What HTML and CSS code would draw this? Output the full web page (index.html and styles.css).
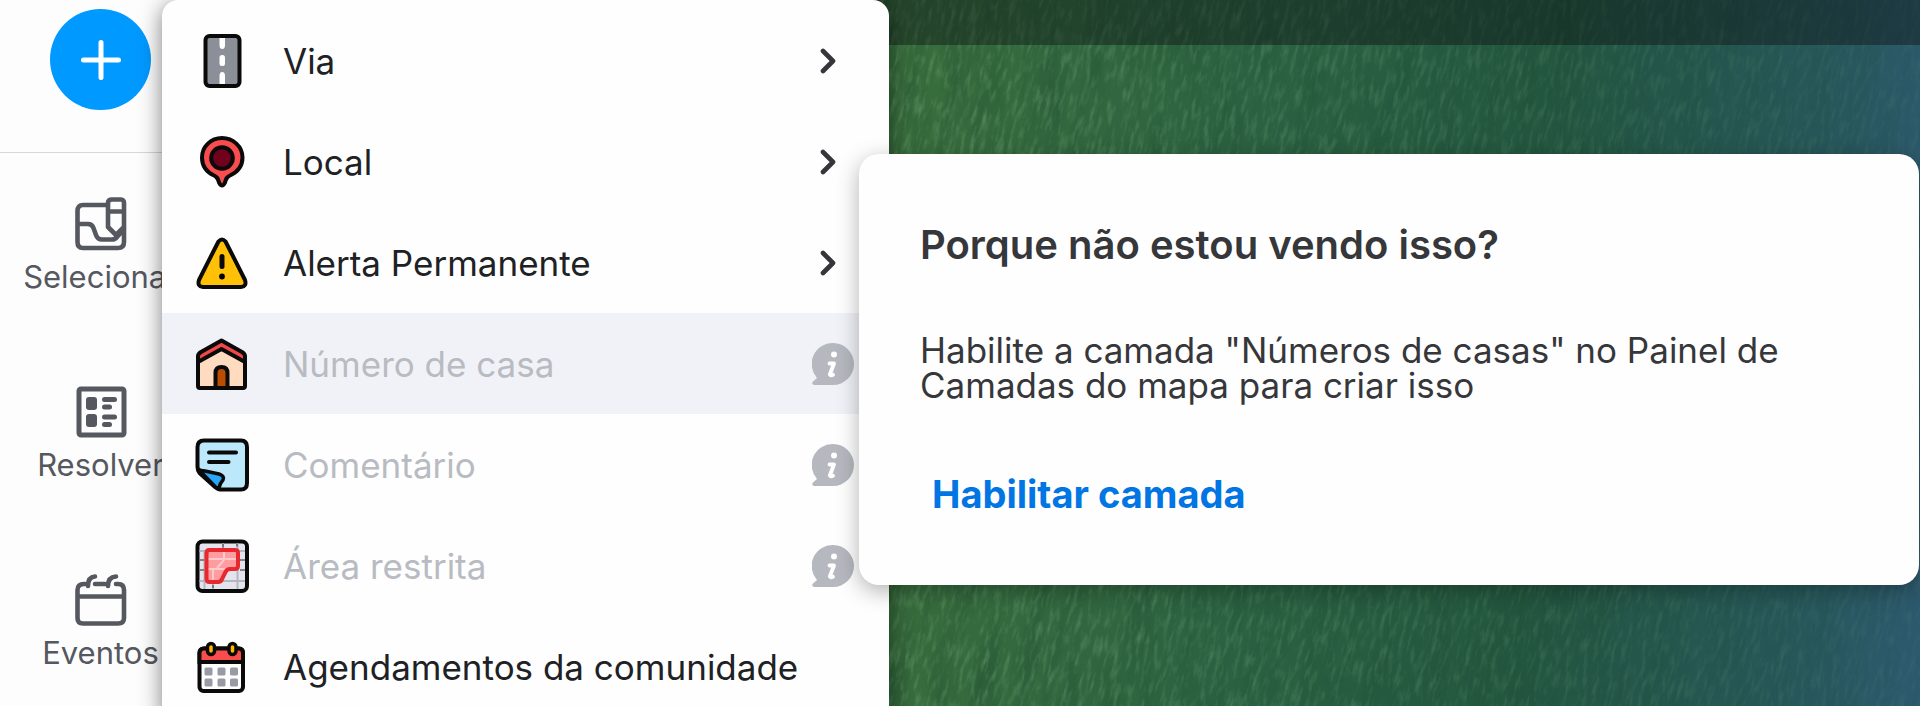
FILE: index.html
```html
<!DOCTYPE html>
<html lang="pt-BR">
<head>
<meta charset="utf-8">
<meta name="viewport" content="width=device-width, initial-scale=1">
<title>Editor de mapas</title>
<link rel="stylesheet" href="styles.css">
</head>
<body>
<svg class="defs" aria-hidden="true">
  <symbol id="chevron" viewBox="0 0 16 26"><path d="M3 3l10 10L3 23" fill="none" stroke="currentColor" stroke-width="4.6" stroke-linecap="round" stroke-linejoin="round"/></symbol>
  <symbol id="info" viewBox="0 0 42 42">
    <path d="M21 0a21 21 0 0 1 0 42H2Q-1 41 1 38.500L5 35A21 21 0 0 1 21 0z" fill="#b5b8be"/>
    <circle cx="22" cy="11.500" r="3" fill="#fff"/>
    <path d="M17.500 20.500H22L17.800 31.500Q18.500 33 21 31.800" fill="none" stroke="#fff" stroke-width="3.800" stroke-linecap="round" stroke-linejoin="round"/>
  </symbol>
</svg>
<div class="app">
  <nav class="sidebar" aria-label="Ferramentas">
    <div class="sidebar-head">
      <button class="add" type="button" aria-label="Adicionar">
        <svg width="40" height="40" viewBox="0 0 40 40"><path d="M20 2.500v35M2.500 20h35" stroke="#fff" stroke-width="5" stroke-linecap="round"/></svg>
      </button>
    </div>
    <button class="tool" type="button">
      <svg width="52" height="54" viewBox="0 0 52 54" fill="none" stroke="#55585e" stroke-width="4.6" stroke-linejoin="round" stroke-linecap="round">
        <path d="M32 8H8Q2.500 8 2.500 14V45Q2.500 51 8 51H43Q49 51 49 45V6Q49 2.500 46 2.500H37Q33 2.500 33 6V30L41 38L49 30M33 14.500H49M2.500 27H13Q17 27 18.500 31L21 38Q22.500 42.500 27 42.500H37Q40 42.500 42 40L49 32"/>
      </svg>
      <span>Selecionar</span>
    </button>
    <button class="tool" type="button">
      <svg width="52" height="54" viewBox="0 0 52 54">
        <rect x="4" y="4" width="45" height="46" rx="2" fill="none" stroke="#55585e" stroke-width="5"/>
        <g fill="#55585e"><rect x="11" y="12" width="11" height="13" rx="3"/><rect x="11" y="29" width="11" height="13" rx="3"/><rect x="27" y="12" width="15" height="5" rx="2.500"/><rect x="27" y="19.500" width="10" height="5" rx="2.500"/><rect x="27" y="29.500" width="15" height="5" rx="2.500"/><rect x="27" y="37" width="10" height="5" rx="2.500"/></g>
      </svg>
      <span>Resolver</span>
    </button>
    <button class="tool" type="button">
      <svg width="52" height="54" viewBox="0 0 52 54" fill="none" stroke="#55585e" stroke-width="4.6" stroke-linecap="round" stroke-linejoin="round">
        <path d="M10 11H9Q2.500 11 2.500 17V45Q2.500 50.500 8 50.500H43Q49 50.500 49 45V17Q49 11 43 11H41M20 11H30M2.500 23.500H49M13 13Q13 4 20 3.500M33 13Q33 4 41 3.500"/>
      </svg>
      <span>Eventos</span>
    </button>
  </nav>

  <main class="map">
    <svg class="water" width="100%" height="100%" aria-hidden="true">
      <filter id="ripple" x="0" y="0" width="100%" height="100%" color-interpolation-filters="sRGB">
        <feTurbulence type="fractalNoise" baseFrequency="0.22 0.05" numOctaves="4" seed="7"/>
        <feColorMatrix values="0 0 0 0 0.500  0 0 0 0 0.700  0 0 0 0 0.520  1.800 0 0 0 -0.850"/>
      </filter>
      <filter id="shade" x="0" y="0" width="100%" height="100%" color-interpolation-filters="sRGB">
        <feTurbulence type="fractalNoise" baseFrequency="0.05 0.01" numOctaves="4" seed="3"/>
        <feColorMatrix values="0 0 0 0 0.080  0 0 0 0 0.250  0 0 0 0 0.160  1.200 0 0 0 -0.500"/>
      </filter>
      <linearGradient id="fade"><stop offset="0" stop-color="#ccc"/><stop offset="0.500" stop-color="#777"/><stop offset="1" stop-color="#222"/></linearGradient>
      <mask id="light"><rect width="100%" height="100%" fill="url(#fade)"/></mask>
      <g mask="url(#light)">
        <g transform="rotate(10)"><rect x="-10%" y="-60%" width="130%" height="200%" filter="url(#shade)"/></g>
        <g transform="rotate(14)"><rect x="-10%" y="-60%" width="130%" height="200%" filter="url(#ripple)"/></g>
      </g>
    </svg>
    <div class="map-bar"></div>
  </main>

  <div class="menu">
    <ul class="menu-list">
      <li><button class="item" type="button">
        <svg class="icon" viewBox="0 0 54 54">
          <rect x="10.500" y="2" width="34" height="50" rx="4" fill="#8b8f98" stroke="#0a0a0a" stroke-width="4"/>
          <path d="M24.500 4h5.500v7q0 4-2.750 4t-2.750-4zM24.500 50h5.500v-8q0-4-2.750-4t-2.750 4z" fill="#fff"/><rect x="24.500" y="21" width="5.500" height="11" rx="2.500" fill="#fff"/>
        </svg>
        <span class="label">Via</span>
        <svg class="chevron"><use href="#chevron"/></svg>
      </button></li>
      <li><button class="item" type="button">
        <svg class="icon" viewBox="0 0 54 54">
          <path d="M27 3C38 3 47.500 11.500 47.500 22.500C47.500 31 42.500 37 35 40.500C31.500 42 31 44 30 47.500Q27 53.500 24 47.500C23 44 22.500 42 19 40.500C11.500 37 7 31 7 22.500C7 11.500 16 3 27 3z" fill="#f94c4c" stroke="#0a0a0a" stroke-width="4"/>
          <circle cx="27" cy="23" r="10.800" fill="#70001c" stroke="#0a0a0a" stroke-width="4"/>
        </svg>
        <span class="label">Local</span>
        <svg class="chevron"><use href="#chevron"/></svg>
      </button></li>
      <li><button class="item" type="button">
        <svg class="icon" viewBox="0 0 54 54">
          <path d="M23.500 5.500Q27 1.500 30.500 5.500Q40 24 50 44Q52 50.500 46 51H8Q2 50.500 4 44Q14 24 23.500 5.500z" fill="#ffc107" stroke="#0a0a0a" stroke-width="4" stroke-linejoin="round"/>
          <path d="M27 20.500v10" stroke="#0a0a0a" stroke-width="5" stroke-linecap="round"/><circle cx="27" cy="40.500" r="2.900"/>
        </svg>
        <span class="label">Alerta Permanente</span>
        <svg class="chevron"><use href="#chevron"/></svg>
      </button></li>
      <li><button class="item item-off item-hover" type="button" aria-describedby="why">
        <svg class="icon" viewBox="0 0 54 54" stroke="#0a0a0a" stroke-width="4" stroke-linejoin="round">
          <path d="M3 24V49Q3 51 5 51H48Q50 51 50 49V24L26.500 11z" fill="#ffdcc0"/>
          <path d="M26.500 3.500L47 15Q50 17 50 19V25L26.500 12L3 25V19Q3 17 6 15z" fill="#f04848"/>
          <path d="M20.500 51V36Q20.500 30 26.500 30T32.500 36V51z" fill="#b94e00"/>
        </svg>
        <span class="label">Número de casa</span>
        <svg class="info"><use href="#info"/></svg>
      </button></li>
      <li><button class="item item-off" type="button">
        <svg class="icon" viewBox="0 0 54 54" stroke="#0a0a0a" stroke-width="4" stroke-linejoin="round" stroke-linecap="round">
          <path d="M9 2.500H46Q52 2.500 52 9V45Q52 51.500 46 51.500H25Q23 51.500 20 49L4.500 35Q2.500 32 2.500 29V9Q2.500 2.500 9 2.500z" fill="#bce8fc"/>
          <path d="M3 31Q5 33 10 33L24 36Q30 38 28 42Q25 45 24 50L21 49.500z" fill="#2ba5f5" stroke-width="3.500"/>
          <path d="M14 14.500H41M14 24H33.500" fill="none"/>
        </svg>
        <span class="label">Comentário</span>
        <svg class="info"><use href="#info"/></svg>
      </button></li>
      <li><button class="item item-off" type="button">
        <svg class="icon" viewBox="0 0 54 54">
          <rect x="2.500" y="2.500" width="49.500" height="49.500" rx="5" fill="#e3e4ec" stroke="#0a0a0a" stroke-width="4"/>
          <path d="M4.500 12H50M4.500 42H50M42.500 4V50M9.500 12V50M28 4v8M18 42v8" stroke="#b4b6c2" stroke-width="2" fill="none"/>
          <path d="M4.500 21H9M45 21h5M4.500 31H9M45 31h5M28 4.500v4M42 4.500v3M18 46v3" stroke="#66636b" stroke-width="1.500"/>
          <path d="M11.500 14Q11.500 11 14.500 11H40Q43 11 43 14V27Q43 30 40 30H35Q32 30 30.500 33L27 40Q26 43 23 43H14.500Q11.500 43 11.500 40z" fill="#ff9c9f"/>
          <path d="M13 20H41M29 12v8M13 30H30M18 30v11M22 29l7-8" stroke="#ffcacb" stroke-width="2" fill="none"/>
          <path d="M11.500 14Q11.500 11 14.500 11H40Q43 11 43 14V27Q43 30 40 30H35Q32 30 30.500 33L27 40Q26 43 23 43H14.500Q11.500 43 11.500 40z" fill="none" stroke="#e8282f" stroke-width="4"/>
        </svg>
        <span class="label">Área restrita</span>
        <svg class="info"><use href="#info"/></svg>
      </button></li>
      <li><button class="item" type="button">
        <svg class="icon" viewBox="0 0 54 54" stroke="#0a0a0a" stroke-width="4">
          <rect x="4.500" y="8.500" width="43.500" height="42.500" rx="4" fill="#fff"/>
          <path d="M4.500 22V13Q4.500 8.500 9 8.500H44Q48 8.500 48 13V22z" fill="#f94c4c"/>
          <rect x="12.500" y="3.500" width="7" height="11" rx="3.500" fill="#ffb900" stroke-width="3.500"/><rect x="34" y="3.500" width="7" height="11" rx="3.500" fill="#ffb900" stroke-width="3.500"/>
          <g fill="#989ba3" stroke="none"><rect x="9.500" y="27.500" width="8" height="8" rx="1.500"/><rect x="22.500" y="27.500" width="8" height="8" rx="1.500"/><rect x="35" y="27.500" width="8" height="8" rx="1.500"/><rect x="9.500" y="38.500" width="8" height="8" rx="1.500"/><rect x="22.500" y="38.500" width="8" height="8" rx="1.500"/><rect x="35" y="38.500" width="8" height="8" rx="1.500"/></g>
        </svg>
        <span class="label">Agendamentos da comunidade</span>
      </button></li>
    </ul>
  </div>

  <section class="popover" id="why">
    <h2 class="popover-title">Porque não estou vendo isso?</h2>
    <p class="popover-text">Habilite a camada "Números de casas" no Painel de Camadas do mapa para criar isso</p>
    <button class="enable" type="button">Habilitar camada</button>
  </section>
</div>
</body>
</html>
```

FILE: styles.css
```css
* { box-sizing: border-box; }
body {
  margin: 0;
  background: #fdfdfe;
  color: #202124;
  font-family: Inter, "Liberation Sans", sans-serif;
}
button {
  border: 0;
  padding: 0;
  background: none;
  color: inherit;
  font: inherit;
  cursor: pointer;
}
.defs { position: absolute; width: 0; height: 0; }
.app {
  position: relative;
  display: flex;
  min-height: 100vh;
  max-height: 100vh;
  overflow: hidden;
}

/* Tool rail */
.sidebar {
  flex: none;
  width: 201px;
  display: flex;
  flex-direction: column;
  background: #fdfdfe;
}
.sidebar-head {
  display: flex;
  justify-content: center;
  margin-bottom: 2px;
  padding: 9px 0 42px;
  border-bottom: 1px solid #d5d6de;
}
.add {
  display: grid;
  place-items: center;
  width: 101px;
  height: 101px;
  border-radius: 50%;
  background: #0099ff;
}
.tool {
  display: flex;
  flex-direction: column;
  align-items: center;
  gap: 8px;
  padding: 42px 0 48px;
  color: #55585e;
  font-size: 31px;
  line-height: 36px;
}

/* Map */
.map {
  position: relative;
  flex: 1;
  background: linear-gradient(93deg, #386d3c 40%, #2b6142 62%, #23563f 77%, #27575a 93%, #2e5a70 100%);
}
.water { position: absolute; inset: 0; }
.map-bar {
  position: relative;
  height: 45px;
  background: rgba(12, 16, 18, 0.42);
}

/* Add menu */
.menu {
  position: absolute;
  top: 0;
  left: 162px;
  width: 727px;
  min-height: 100%;
  padding-top: 10px;
  border-radius: 16px 16px 0 0;
  background: #fefefe;
  box-shadow: 0 4px 22px rgba(0, 0, 0, 0.5);
}
.menu-list { margin: 0; padding: 0; list-style: none; }
.item {
  display: flex;
  align-items: center;
  width: 100%;
  height: 101px;
  padding: 0 35px 0 33px;
  font-size: 35px;
  text-align: left;
}
.item-off { color: #b8bbc1; }
.item-hover { background: #f1f2f7; }
.icon { flex: none; width: 54px; height: 54px; margin-right: 34px; }
.label { flex: 1; white-space: nowrap; }
.chevron { width: 16px; height: 26px; margin-right: 18px; color: #35363a; }
.info { width: 42px; height: 42px; }

/* Explanation popover */
.popover {
  position: absolute;
  top: 154px;
  left: 859px;
  right: 1px;
  padding: 68px 61px;
  border-radius: 20px;
  background: #fefefe;
  color: #36373a;
  box-shadow: 0 6px 22px rgba(0, 0, 0, 0.3);
}
.popover-title { margin: 0; font-size: 40px; font-weight: 600; line-height: 46px; }
.popover-text { margin: 65px 0 68px; font-size: 35px; line-height: 35px; }
.enable {
  display: block;
  padding: 0 12px;
  color: #0075e3;
  font-size: 38px;
  font-weight: 700;
  line-height: 46px;
}
```
